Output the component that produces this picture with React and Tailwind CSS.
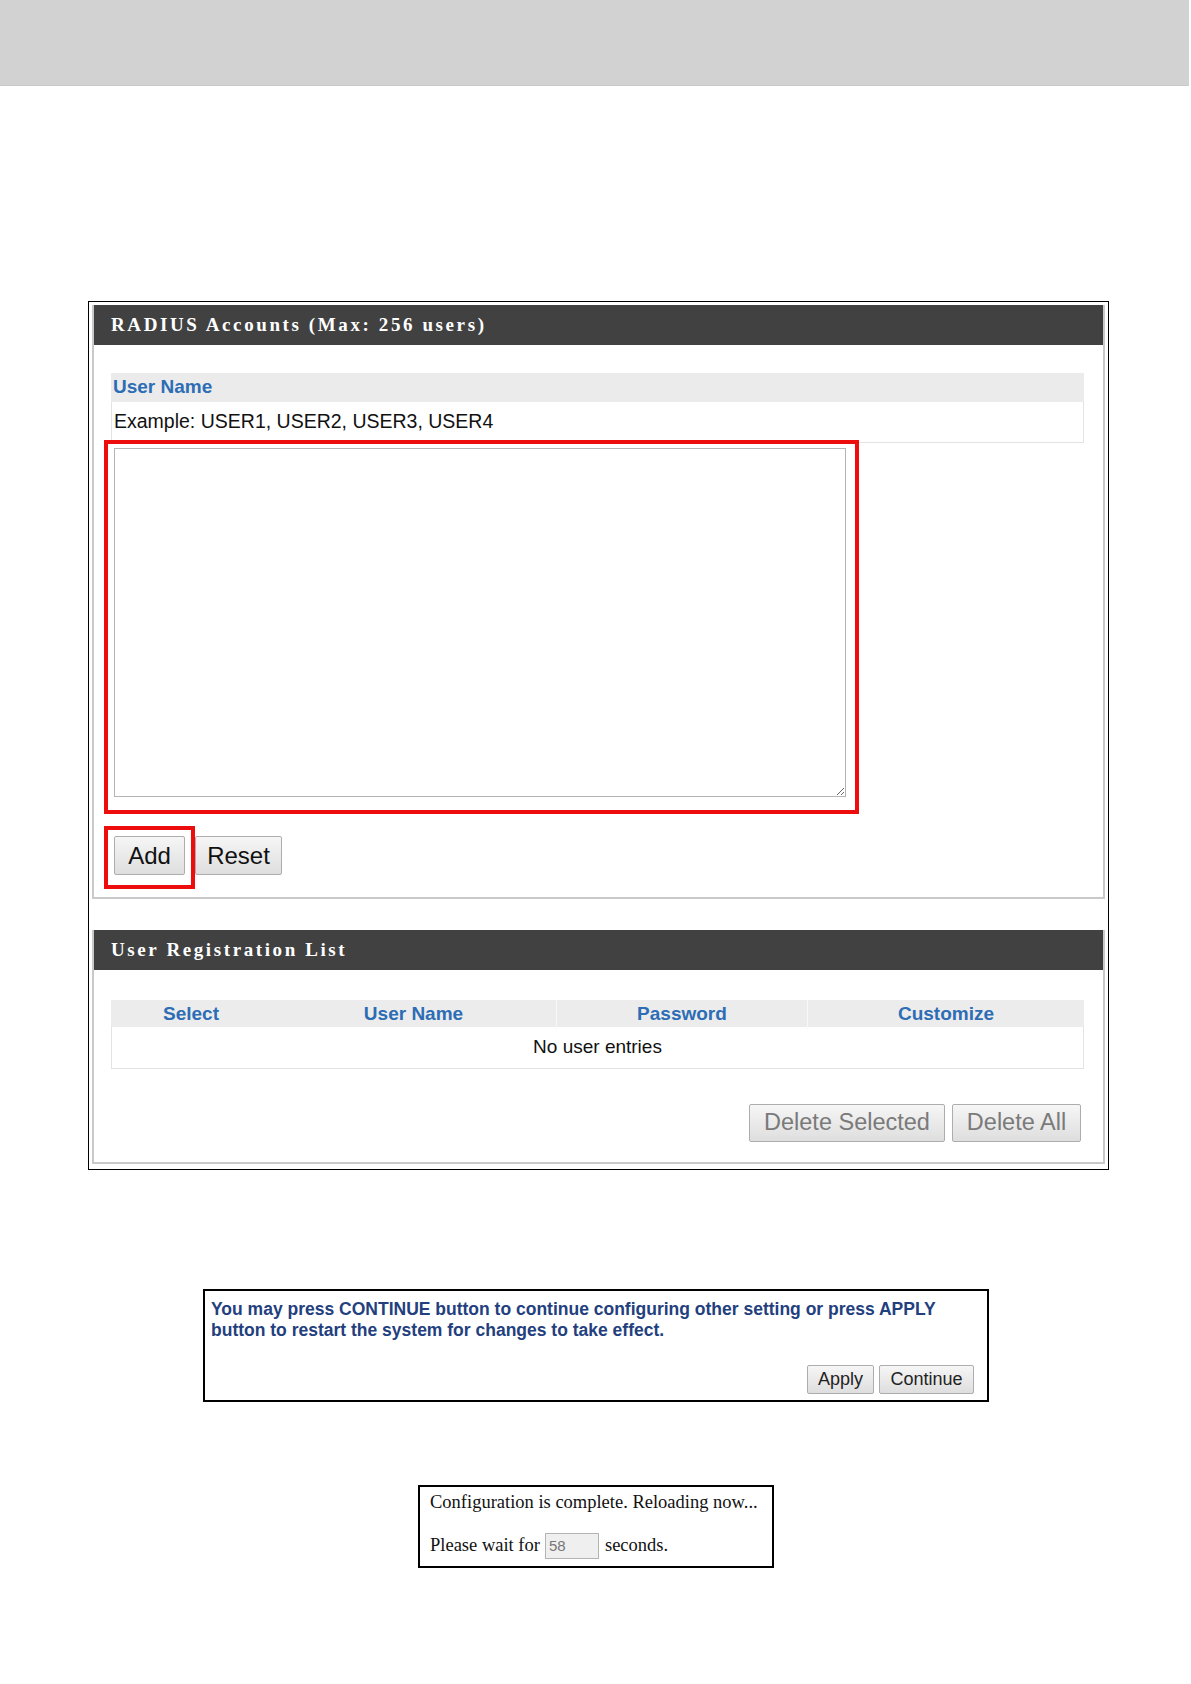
const serif = { fontFamily: '"Liberation Serif", "Times New Roman", serif' }

const PanelHeader = ({ title }) => (
  <div
    className="h-[40px] bg-[#414141] flex items-center pl-[17px] text-white font-bold text-[19px] tracking-[2.6px]"
    style={serif}
  >
    {title}
  </div>
)

const GrayButton = ({ children, className = "" }) => (
  <button
    className={
      "border border-[#adadad] rounded-[2px] bg-gradient-to-b from-[#f6f6f6] to-[#dedede] flex items-center justify-center " +
      className
    }
  >
    {children}
  </button>
)

export default function App() {
  return (
    <div className="w-[1191px] min-h-[1684px] bg-white font-['Liberation_Sans',Arial,sans-serif]">
      {/* top band */}
      <div className="h-[86px] w-[1189px] bg-[#d2d2d2] border-b border-[#c9c9c9]" />

      {/* RADIUS accounts screenshot */}
      <div className="mt-[215px] ml-[88px] w-[1021px] border border-black pt-[3px] px-[3px] pb-[5px]">
        <div className="border-2 border-t-0 border-[#c9c9c9]">
          <PanelHeader title="RADIUS Accounts (Max: 256 users)" />
          <div className="pl-[10px] pt-[28px] pb-[8px]">
            <div className="ml-[7px] w-[973px]">
              <div className="h-[29px] bg-[#ebebeb] flex items-center pl-[2px] text-[19px] font-bold text-[#2d6db5]">
                User Name
              </div>
              <div className="h-[41px] border border-t-0 border-[#e3e3e3] flex items-center pl-[2px] text-[19.5px] text-[#111]">
                Example: USER1, USER2, USER3, USER4
              </div>
            </div>
            <div className="mt-[-3px] w-[755px] h-[374px] border-4 border-[#ee0d0d] pt-[4px] pl-[6px]">
              <textarea className="block w-[732px] h-[349px] border border-[#b4b4b4] bg-white resize" />
            </div>
            <div className="mt-[12px] flex items-start">
              <div className="w-[91px] h-[63px] border-4 border-[#ee0d0d] pt-[6px] pl-[6px]">
                <GrayButton className="w-[71px] h-[39px] text-[24px] text-[#111]">Add</GrayButton>
              </div>
              <GrayButton className="w-[87px] h-[39px] mt-[10px] text-[24px] text-[#111]">Reset</GrayButton>
            </div>
          </div>
        </div>

        {/* user registration list */}
        <div className="mt-[31px] border-2 border-t-0 border-[#c9c9c9]">
          <PanelHeader title="User Registration List" />
          <div className="pl-[17px] pt-[30px] pb-[20px]">
            <div className="w-[973px]">
              <div className="h-[27px] bg-[#ececec] grid grid-cols-[160px_285px_251px_277px] text-[19px] font-bold text-[#2d6db5]">
                <div className="flex items-center justify-center">Select</div>
                <div className="flex items-center justify-center">User Name</div>
                <div className="flex items-center justify-center border-l border-[#f8f8f8]">Password</div>
                <div className="flex items-center justify-center border-l border-[#f8f8f8]">Customize</div>
              </div>
              <div className="h-[42px] border border-t-0 border-[#e3e3e3] flex items-center justify-center text-[19px] text-[#111]">
                No user entries
              </div>
              <div className="mt-[35px] flex justify-end gap-[7px] pr-[3px]">
                <GrayButton className="w-[196px] h-[38px] text-[23.5px] text-[#7a7a7a]">Delete Selected</GrayButton>
                <GrayButton className="w-[129px] h-[38px] text-[23.5px] text-[#7a7a7a]">Delete All</GrayButton>
              </div>
            </div>
          </div>
        </div>
      </div>

      {/* apply / continue box */}
      <div className="mt-[119px] ml-[203px] w-[786px] h-[113px] border-2 border-black flex flex-col justify-between pl-[6px] pr-[13px] pt-[8px] pb-[6px]">
        <p className="text-[17.5px] leading-[20.5px] font-bold text-[#23407e]">
          You may press CONTINUE button to continue configuring other setting or press APPLY
          <br />
          button to restart the system for changes to take effect.
        </p>
        <div className="flex justify-end gap-[5px]">
          <GrayButton className="w-[67px] h-[29px] text-[18px] text-[#222]">Apply</GrayButton>
          <GrayButton className="w-[95px] h-[29px] text-[18px] text-[#222]">Continue</GrayButton>
        </div>
      </div>

      {/* reloading box */}
      <div
        className="mt-[83px] ml-[418px] w-[356px] h-[83px] border-2 border-black pl-[10px] pt-[3px] text-[18.5px] text-[#111]"
        style={serif}
      >
        <p className="leading-[24px]">Configuration is complete. Reloading now...</p>
        <div className="mt-[18px] flex items-center">
          <span>Please wait for</span>
          <input
            readOnly
            value="58"
            className="ml-[5px] mr-[6px] w-[54px] h-[26px] bg-[#efefef] border border-[#b4b4b4] pl-[3px] text-[15px] text-[#777] font-['Liberation_Sans',Arial,sans-serif]"
          />
          <span>seconds.</span>
        </div>
      </div>
    </div>
  )
}
